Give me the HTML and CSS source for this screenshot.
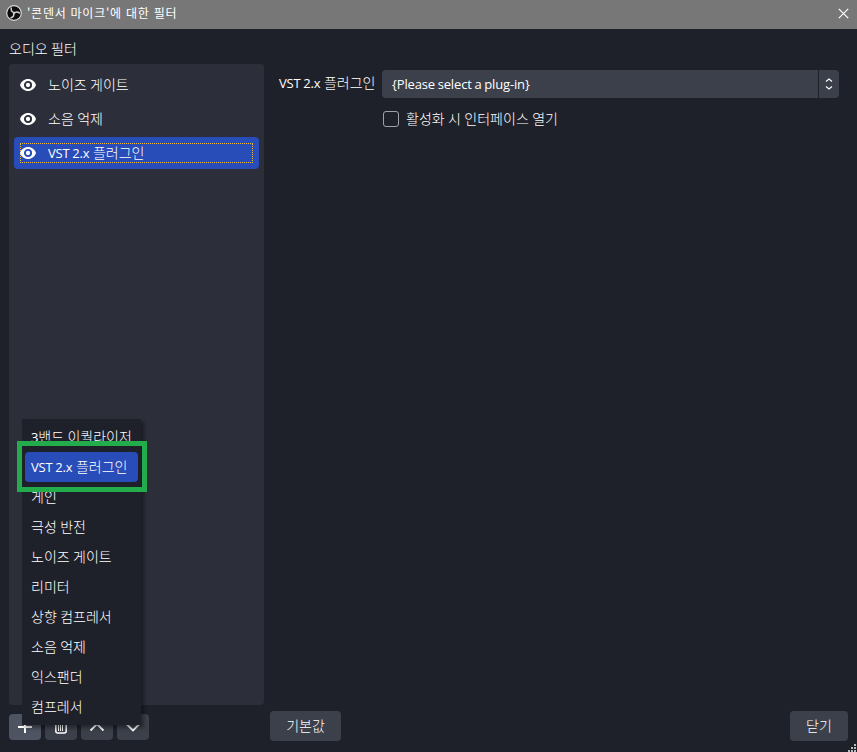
FILE: index.html
```html
<!DOCTYPE html>
<html lang="ko">
<head>
    <meta charset="UTF-8">
    <title>'콘덴서 마이크'에 대한 필터</title>
    <link rel="stylesheet" href="styles.css">
</head>
<body>
    <svg class="defs">
        <symbol id="eye" viewBox="0 0 16 12">
            <path d="M8 0C4.300 0 1.200 2.400 0 6c1.200 3.600 4.300 6 8 6s6.800-2.400 8-6c-1.200-3.600-4.300-6-8-6z" fill="#fff"/>
            <circle cx="8" cy="6" r="3.100" fill="none" stroke="currentColor" stroke-width="1.900"/>
        </symbol>
    </svg>
    <div class="titlebar">
        <svg class="logo" width="16" height="16" viewBox="0 0 16 16">
            <circle cx="8" cy="8" r="7.300" fill="#0c0c0c" stroke="#d8d8d8" stroke-width="1.200"/>
            <g fill="none" stroke="#d0d0d0" stroke-width="1.500" stroke-linecap="round">
                <path d="M5.300 3.200c-.5 2.500.7 4 2.900 4.400"/>
                <path d="M5.300 3.200c-.5 2.500.7 4 2.900 4.400" transform="rotate(120 8 8)"/>
                <path d="M5.300 3.200c-.5 2.500.7 4 2.900 4.400" transform="rotate(240 8 8)"/>
            </g>
        </svg>
        <span class="title">'콘덴서 마이크'에 대한 필터</span>
        <svg class="close" width="11" height="11" viewBox="0 0 11 11"><path d="M.8.8l9.400 9.400M10.200.8L.8 10.200" stroke="#fff" stroke-width="1.200"/></svg>
    </div>

    <div class="content">
        <div class="left">
            <div class="heading">오디오 필터</div>
            <ul class="filters">
                <li><svg class="eye"><use href="#eye"/></svg><span class="text">노이즈 게이트</span></li>
                <li><svg class="eye"><use href="#eye"/></svg><span class="text">소음 억제</span></li>
                <li class="selected"><div class="focus"><svg class="eye"><use href="#eye"/></svg><span class="text"><span class="en">VST 2.x</span> 플러그인</span></div></li>
            </ul>
            <div class="toolbar">
                <button class="tool active"><svg width="16" height="16" viewBox="0 0 16 16"><path d="M8 1v13M1 8h14" stroke="#fff" stroke-width="2"/></svg></button>
                <button class="tool"><svg width="16" height="16" viewBox="0 0 16 16"><path d="M1.500 3h13M5.500 3V1h5v2M2.800 3v9q0 2 2 2h6.400q2 0 2-2V3" fill="none" stroke="#fff" stroke-width="1.500"/><path d="M5.500 5v7M7.500 5v7M9.500 5v7" stroke="#fff" stroke-width="1"/></svg></button>
                <button class="tool"><svg width="16" height="16" viewBox="0 0 16 16"><path d="M1.500 11.500L8 5l6.500 6.500" fill="none" stroke="#fff" stroke-width="1.800"/></svg></button>
                <button class="tool"><svg width="16" height="16" viewBox="0 0 16 16"><path d="M1.500 5L8 11.500 14.500 5" fill="none" stroke="#fff" stroke-width="1.800"/></svg></button>
            </div>
        </div>

        <div class="right">
            <div class="row">
                <label class="name"><span class="en">VST 2.x</span> 플러그인</label>
                <div class="combo">
                    <span class="value">{Please select a plug-in}</span>
                    <span class="arrows"><svg width="8" height="12" viewBox="0 0 8 12"><path d="M1 3.500L4 1l3 2.500M1 8.500L4 11l3-2.500" fill="none" stroke="#fff" stroke-width="1.100"/></svg></span>
                </div>
            </div>
            <div class="check">
                <span class="box"></span>
                <span class="text">활성화 시 인터페이스 열기</span>
            </div>
            <div class="footer">
                <button class="btn">기본값</button>
                <button class="btn btn-close">닫기</button>
            </div>
        </div>
    </div>

    <ul class="menu">
        <li><span class="en">3</span>밴드 이퀄라이저</li>
        <li class="selected"><span class="en">VST 2.x</span> 플러그인</li>
        <li>게인</li>
        <li>극성 반전</li>
        <li>노이즈 게이트</li>
        <li>리미터</li>
        <li>상향 컴프레서</li>
        <li>소음 억제</li>
        <li>익스팬더</li>
        <li>컴프레서</li>
    </ul>
    <div class="highlight"></div>
    <svg class="grip" width="8" height="8" viewBox="0 0 8 8"><path d="M6 0h2v2H6zM3 3h2v2H3zM6 3h2v2H6zM0 6h2v2H0zM3 6h2v2H3zM6 6h2v2H6z" fill="#bbb"/></svg>
</body>
</html>
```

FILE: styles.css
```css
* {
    box-sizing: border-box;
}
body {
    margin: 0;
    height: 752px;
    display: flex;
    flex-direction: column;
    overflow: hidden;
    background: #1f212a;
    color: #fff;
    font-family: "Noto Sans CJK KR", sans-serif;
    font-size: 14px;
    font-weight: 300;
    line-height: 20px;
    word-spacing: -0.5px;
    white-space: nowrap;
}
ul {
    list-style: none;
    margin: 0;
    padding: 0;
}
.defs {
    position: absolute;
    width: 0;
    height: 0;
}
.en {
    font-family: "Open Sans", sans-serif;
    font-size: 13px;
    font-weight: 400;
    letter-spacing: -0.15px;
}
.text {
    padding-bottom: 2px;
}
.titlebar {
    height: 29px;
    flex: none;
    display: flex;
    align-items: center;
    padding: 0 8px 3px 6px;
    background: #777;
    font-size: 12px;
    font-weight: 400;
    word-spacing: 0;
}
.title {
    margin-left: 5px;
    letter-spacing: 0.75px;
}
.close {
    margin-left: auto;
}
.content {
    flex: 1;
    display: flex;
    min-height: 0;
}
.left {
    width: 264px;
    padding-left: 9px;
}
.heading {
    height: 35px;
    padding-top: 9px;
}
.filters {
    height: 641px;
    padding: 5px;
    border-radius: 4px;
    background: #2c2e39;
}
.filters li {
    height: 32px;
    margin-bottom: 2px;
    padding: 0 6px;
    display: flex;
    align-items: center;
    border-radius: 4px;
}
.filters .selected {
    background: #284cb8;
}
.eye {
    width: 16px;
    height: 12px;
    flex: none;
    margin-right: 12px;
    color: #2c2e39;
}
.selected .eye {
    color: #284cb8;
}
.focus {
    flex: 1;
    height: 20px;
    display: flex;
    align-items: center;
    border: 1px dotted #f0bc30;
}
.focus .eye {
    margin-left: -1px;
}
.toolbar {
    display: flex;
    gap: 4px;
    margin-top: 9px;
}
.tool {
    width: 32px;
    height: 26px;
    padding: 0;
    display: flex;
    align-items: center;
    justify-content: center;
    border: none;
    border-radius: 4px;
    background: #3c404b;
}
.tool.active {
    background: #4f5462;
}
.right {
    flex: 1;
    display: flex;
    flex-direction: column;
    padding: 41px 9px 11px 6px;
}
.row {
    display: flex;
    padding: 0 9px;
}
.name {
    width: 103px;
    line-height: 24px;
}
.combo {
    flex: 1;
    height: 28px;
    display: flex;
    border-radius: 4px;
    background: #3c404b;
    font-family: "Open Sans", sans-serif;
    font-size: 13px;
    font-weight: 400;
    letter-spacing: -0.15px;
    line-height: 28px;
}
.value {
    flex: 1;
    padding-left: 10px;
}
.arrows {
    width: 21px;
    display: flex;
    align-items: center;
    justify-content: center;
    border-left: 1px solid #1f212a;
}
.check {
    height: 20px;
    display: flex;
    align-items: center;
    gap: 7px;
    margin: 11px 0 0 113px;
}
.box {
    width: 16px;
    height: 16px;
    border: 1px solid #a0a1a6;
    border-radius: 3px;
}
.footer {
    display: flex;
    justify-content: space-between;
    margin-top: auto;
}
.btn {
    width: 71px;
    height: 30px;
    padding: 0 0 2px;
    border: none;
    border-radius: 4px;
    background: #3c404b;
    color: #fff;
    font: inherit;
}
.btn-close {
    width: 58px;
}
.menu {
    position: absolute;
    left: 22px;
    top: 419px;
    width: 119px;
    height: 306px;
    padding: 3px;
    background: #1f212a;
    box-shadow: 3px 3px 4px rgba(0, 0, 0, 0.4);
}
.menu li {
    height: 30px;
    padding-left: 6px;
    line-height: 28px;
    border-radius: 4px;
}
.menu .selected {
    width: 113px;
    background: #284cb8;
}
.highlight {
    position: absolute;
    left: 17px;
    top: 441px;
    width: 130px;
    height: 51px;
    border: 5px solid #22ac4b;
}
.grip {
    position: absolute;
    right: 1px;
    bottom: 0;
}
```
